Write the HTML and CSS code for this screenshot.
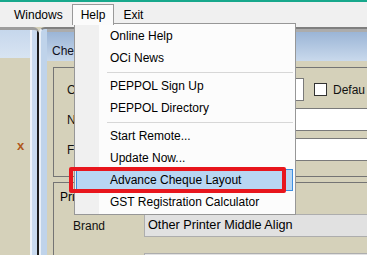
FILE: index.html
```html
<!DOCTYPE html>
<html lang="en">

<head>
    <meta charset="UTF-8">
    <meta name="viewport" content="width=device-width, initial-scale=1.0">
    <link rel="stylesheet" href="styles.css">
</head>

<body>
    <div class="topline"></div>
    <div class="menubar">
        <span class="mitem">Windows</span>
        <span class="mitem open">Help</span>
        <span class="mitem">Exit</span>
    </div>

    <div class="mdi">
        <div class="win win-a">
            <div class="win-main">
                <div class="win-title"></div>
                <div class="win-body">
                    <span class="mark">x</span>
                </div>
            </div>
            <div class="win-edge"></div>
        </div>

        <div class="win win-b">
            <div class="win-inner">
                <div class="win-title">Cheque</div>
                <div class="win-body">
                    <div class="group">
                        <div class="form-grid">
                            <label class="lbl">Code</label>
                            <div class="field-line">
                                <div class="textbox short"></div>
                                <span class="check"></span>
                                <span class="check-lbl">Defau</span>
                            </div>
                            <label class="lbl">Name</label>
                            <div class="textbox"></div>
                            <label class="lbl">Format</label>
                            <div class="textbox"></div>
                        </div>
                    </div>
                    <div class="group group-printer">
                        <div class="group-lbl">Printer</div>
                        <div class="form-grid printer-grid">
                            <label class="lbl">Brand</label>
                            <div class="combo">Other Printer Middle Align</div>
                            <label class="lbl"></label>
                            <div class="combo"></div>
                        </div>
                    </div>
                </div>
            </div>
        </div>
    </div>

    <!-- menu Help abierto -->
    <div class="dropdown">
        <div class="dd-item">Online Help</div>
        <div class="dd-item">OCi News</div>
        <div class="dd-sep"></div>
        <div class="dd-item">PEPPOL Sign Up</div>
        <div class="dd-item">PEPPOL Directory</div>
        <div class="dd-sep"></div>
        <div class="dd-item">Start Remote...</div>
        <div class="dd-item">Update Now...</div>
        <div class="dd-item active">Advance Cheque Layout</div>
        <div class="dd-item">GST Registration Calculator</div>
    </div>
    <div class="callout"></div>
</body>

</html>
```

FILE: styles.css
```css
* {
    box-sizing: border-box;
}

body {
    margin: 0;
    width: 367px;
    height: 255px;
    overflow: hidden;
    position: relative;
    font-family: "Liberation Sans", Arial, sans-serif;
    font-size: 12px;
    color: #000;
    background: #d5d1ba;
}

.topline {
    height: 2px;
    background: #17a88c;
}

.menubar {
    height: 25px;
    background: #f0f0f0;
    display: flex;
    align-items: stretch;
    padding-left: 5px;
}

.mitem {
    display: flex;
    align-items: center;
    padding: 0 9px;
    line-height: 14px;
}

.mitem.open {
    align-self: flex-start;
    margin-top: 2px;
    height: 21px;
    padding: 0 8px;
    border: 1px solid #999;
    border-bottom: 0;
    background: #fbfbfb;
    position: relative;
    z-index: 5;
}

/* zona MDI */
.mdi {
    position: relative;
    height: 228px;
    overflow: hidden;
}

.win {
    position: absolute;
    top: 0;
    height: 240px;
}

.win-a {
    left: -12px;
    width: 51px;
    display: flex;
    border-top: 3px solid #9d9d9d;
    border-top-right-radius: 6px;
    overflow: hidden;
}

.win-main {
    flex: 1;
    display: flex;
    flex-direction: column;
}

.win-a .win-title {
    height: 28px;
    background: linear-gradient(to bottom, #c6d7ec, #d8e4f2);
}

.win-a .win-body {
    flex: 1;
    background: #d5d1ba;
    padding: 81px 0 0 29px;
}

.mark {
    display: inline-block;
    font-size: 13px;
    font-weight: bold;
    line-height: 1;
    color: #b0581c;
}

.win-edge {
    width: 9px;
    background: #c9daef;
    border-left: 2px solid #eef3fa;
    border-right: 2px solid #1d1d1d;
}

.win-b {
    left: 39px;
    right: -10px;
    border-top: 2px solid #7f7f7f;
    border-left: 2px solid #e9eff7;
    border-top-left-radius: 6px;
    background: #bfd3ea;
    padding-left: 6px;
    overflow: hidden;
}

.win-inner {
    border-top: 3px solid #acacac;
}

.win-b .win-title {
    height: 29px;
    padding: 12px 0 0 5px;
    line-height: 14px;
    color: #101020;
    background: linear-gradient(to bottom, #9bb5d6, #c9d9ec);
}

.win-b .win-body {
    height: 210px;
    background: #d5d1ba;
    padding: 6px 0 0 6px;
}

.group {
    height: 110px;
    border: 1px solid #747474;
    border-right: 0;
    padding: 10px 0 0 13px;
}

.form-grid {
    display: grid;
    grid-template-columns: 77px 1fr;
    grid-auto-rows: 23px;
    row-gap: 7px;
    align-items: center;
}

.lbl {
    color: #111;
}

.field-line {
    display: flex;
    align-items: center;
    height: 23px;
}

.textbox {
    height: 23px;
    background: #fff;
    border: 1px solid #7a7a7a;
    border-right: 0;
}

.textbox.short {
    width: 160px;
    border-right: 1px solid #7a7a7a;
}

.check {
    flex: none;
    width: 13px;
    height: 13px;
    margin-left: 10px;
    background: #fff;
    border: 1px solid #333;
}

.check-lbl {
    margin-left: 6px;
    color: #111;
}

.group-printer {
    margin-top: 5px;
    height: 90px;
    padding: 7px 0 0 6px;
}

.group-lbl {
    line-height: 14px;
}

.printer-grid {
    grid-template-columns: 71px 1fr;
    margin: 10px 0 0 13px;
    row-gap: 16px;
}

.combo {
    height: 23px;
    background: #e1e1e1;
    border: 1px solid #adadad;
    border-right: 0;
    padding-left: 3px;
    font-size: 12.7px;
    line-height: 21px;
    white-space: nowrap;
}

/* desplegable */
.dropdown {
    position: absolute;
    left: 74px;
    top: 23px;
    width: 222px;
    height: 192px;
    padding: 1px 0;
    border: 1px solid #979797;
    background: linear-gradient(to right, #f0f0f0 24px, #fcfcfc 24px);
    z-index: 4;
}

.dd-item {
    height: 22px;
    margin: 0 2px 0 1px;
    padding-left: 33px;
    border: 1px solid transparent;
    display: flex;
    align-items: center;
    white-space: nowrap;
}

.dd-item.active {
    background: #b8d6f2;
    border-color: #3d8ee0;
}

.dd-sep {
    height: 1px;
    margin: 3px 2px 2px 32px;
    background: #d7d7d7;
}

.callout {
    position: absolute;
    left: 69px;
    top: 167px;
    width: 217px;
    height: 26px;
    border: 4px solid #e8161d;
    border-radius: 2px;
    z-index: 6;
}
```
